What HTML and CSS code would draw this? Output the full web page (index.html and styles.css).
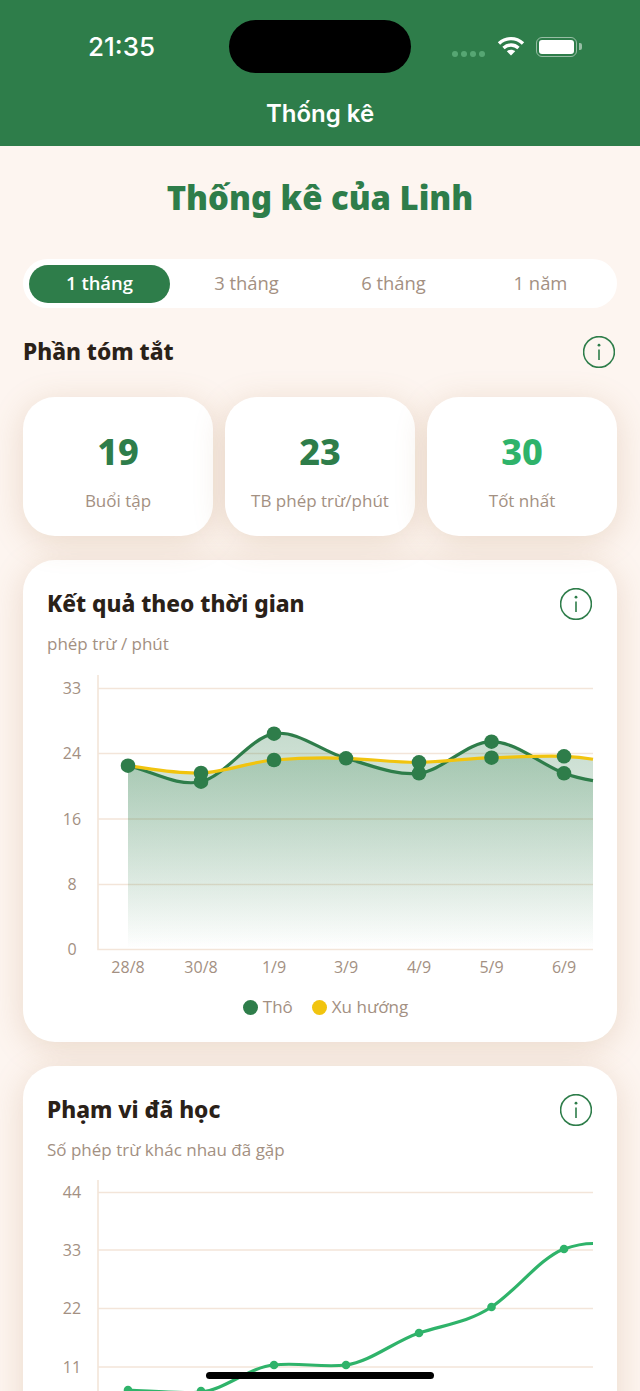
FILE: index.html
```html
<!DOCTYPE html>
<html lang="vi">
<head>
    <meta charset="UTF-8">
    <meta name="viewport" content="width=device-width, initial-scale=1.0">
    <title>Thống kê</title>
    <link rel="stylesheet" href="styles.css">
</head>
<body>
    <div class="island"></div>

    <header class="app-header">
        <div class="status-bar">
            <span class="clock">21:35</span>
            <div class="status-icons">
                <div class="signal"><i></i><i></i><i></i><i></i></div>
                <svg class="wifi" width="28" height="20" viewBox="0 0 28 20">
                    <path d="M2 7.5C9 1 19 1 26 7.5" />
                    <path d="M6.5 12C11 8 17 8 21.5 12" />
                    <path class="wifi-tip" d="M14 19.5L9.8 15.2C12.2 13.2 15.8 13.2 18.2 15.2Z" />
                </svg>
                <div class="battery"><div class="battery-level"></div></div>
            </div>
        </div>
        <div class="nav-title">Thống kê</div>
    </header>

    <main class="content">
        <h1>Thống kê của Linh</h1>

        <div class="range-tabs">
            <span class="range-tab active">1 tháng</span>
            <span class="range-tab">3 tháng</span>
            <span class="range-tab">6 tháng</span>
            <span class="range-tab">1 năm</span>
        </div>

        <div class="section-head">
            <h2>Phần tóm tắt</h2>
            <svg class="info" width="32" height="32" viewBox="0 0 32 32">
                <circle cx="16" cy="16" r="15.4" />
                <path d="M16 13.5V24" />
                <circle class="info-dot" cx="16" cy="9.2" r="1.4" />
            </svg>
        </div>

        <div class="stats">
            <div class="stat-card">
                <div class="stat-value">19</div>
                <div class="stat-label">Buổi tập</div>
            </div>
            <div class="stat-card">
                <div class="stat-value">23</div>
                <div class="stat-label">TB phép trừ/phút</div>
            </div>
            <div class="stat-card">
                <div class="stat-value best">30</div>
                <div class="stat-label">Tốt nhất</div>
            </div>
        </div>

        <section class="chart-card">
            <div class="section-head">
                <h2>Kết quả theo thời gian</h2>
                <svg class="info" width="32" height="32" viewBox="0 0 32 32">
                    <circle cx="16" cy="16" r="15.4" />
                    <path d="M16 13.5V24" />
                    <circle class="info-dot" cx="16" cy="9.2" r="1.4" />
                </svg>
            </div>
            <p class="chart-sub">phép trừ / phút</p>
            <svg class="chart" width="546" height="325" viewBox="47 670 546 325">
                <defs>
                    <linearGradient id="areaFade" gradientUnits="userSpaceOnUse" x1="0" y1="735" x2="0" y2="949">
                        <stop offset="0" stop-color="#2e7d4a" stop-opacity="0.27" />
                        <stop offset="1" stop-color="#2e7d4a" stop-opacity="0" />
                    </linearGradient>
                </defs>
                <path class="axis" d="M98 675V949.5H593" />
                <path class="grid" d="M98 688.5H593M98 753.5H593M98 819H593M98 884.5H593" />
                <path class="area" d="M128 765.7C152 771 177 787 201 781.7C225 776.4 250 737.6 274 733.7C298 729.9 322 751.8 346 758.3C370 764.8 395 776 419 773.3C443 770.6 467 741.7 491.5 741.7C516 741.7 540 764 564 773.3C574 777 583 779 593 780.7V949H128Z" />
                <path class="area" d="M128 765.7C152 769 177 774 201 773C225 772 250 762 274 760C298 758 322 757.5 346 758.3C370 759 395 762.5 419 762.3C443 762 467 758.5 491.5 757.7C516 757 540 755.5 564 756.3C574 756.7 583 757.5 593 759.3V949H128Z" />
                <path class="line raw" d="M128 765.7C152 771 177 787 201 781.7C225 776.4 250 737.6 274 733.7C298 729.9 322 751.8 346 758.3C370 764.8 395 776 419 773.3C443 770.6 467 741.7 491.5 741.7C516 741.7 540 764 564 773.3C574 777 583 779 593 780.7" />
                <path class="line trend" d="M128 765.7C152 769 177 774 201 773C225 772 250 762 274 760C298 758 322 757.5 346 758.3C370 759 395 762.5 419 762.3C443 762 467 758.5 491.5 757.7C516 757 540 755.5 564 756.3C574 756.7 583 757.5 593 759.3" />
                <g class="dots">
                    <circle cx="128" cy="765.7" r="7.3" />
                    <circle cx="201" cy="781.7" r="7.3" />
                    <circle cx="274" cy="733.7" r="7.3" />
                    <circle cx="346" cy="758.3" r="7.3" />
                    <circle cx="419" cy="773.3" r="7.3" />
                    <circle cx="491.5" cy="741.7" r="7.3" />
                    <circle cx="564" cy="773.3" r="7.3" />
                    <circle cx="201" cy="773" r="7.3" />
                    <circle cx="274" cy="760" r="7.3" />
                    <circle cx="419" cy="762.3" r="7.3" />
                    <circle cx="491.5" cy="757.7" r="7.3" />
                    <circle cx="564" cy="756.3" r="7.3" />
                </g>
                <g class="tick-y">
                    <text x="72" y="693.5">33</text>
                    <text x="72" y="759">24</text>
                    <text x="72" y="824.5">16</text>
                    <text x="72" y="890">8</text>
                    <text x="72" y="955">0</text>
                </g>
                <g class="tick-x">
                    <text x="128" y="973">28/8</text>
                    <text x="201" y="973">30/8</text>
                    <text x="274" y="973">1/9</text>
                    <text x="346" y="973">3/9</text>
                    <text x="419" y="973">4/9</text>
                    <text x="491.5" y="973">5/9</text>
                    <text x="564" y="973">6/9</text>
                </g>
            </svg>
            <div class="legend">
                <span class="legend-item"><i class="swatch green"></i>Thô</span>
                <span class="legend-item"><i class="swatch yellow"></i>Xu hướng</span>
            </div>
        </section>

        <section class="chart-card">
            <div class="section-head">
                <h2>Phạm vi đã học</h2>
                <svg class="info" width="32" height="32" viewBox="0 0 32 32">
                    <circle cx="16" cy="16" r="15.4" />
                    <path d="M16 13.5V24" />
                    <circle class="info-dot" cx="16" cy="9.2" r="1.4" />
                </svg>
            </div>
            <p class="chart-sub">Số phép trừ khác nhau đã gặp</p>
            <svg class="chart" width="546" height="325" viewBox="47 1176 546 325">
                <path class="axis" d="M98 1180V1425.5H593" />
                <path class="grid" d="M98 1192.5H593M98 1250H593M98 1308.5H593M98 1367H593" />
                <path class="line learned" d="M128 1390C152 1391 177 1394 201 1392C225 1390 250 1366.5 274 1365C298 1362 322 1368 346 1365C370 1362 395 1341 419 1333C443 1325 467 1323 491.5 1307C516 1291 540 1258 564 1249C574 1245.5 583 1243.5 593 1243.5" />
                <g class="dots learned-dots">
                    <circle cx="128" cy="1390" r="4.3" />
                    <circle cx="201" cy="1391" r="4.3" />
                    <circle cx="274" cy="1365" r="4.3" />
                    <circle cx="346" cy="1365" r="4.3" />
                    <circle cx="419" cy="1333" r="4.3" />
                    <circle cx="491.5" cy="1307" r="4.3" />
                    <circle cx="564" cy="1249" r="4.3" />
                </g>
                <g class="tick-y">
                    <text x="72" y="1198">44</text>
                    <text x="72" y="1256">33</text>
                    <text x="72" y="1314">22</text>
                    <text x="72" y="1372.5">11</text>
                </g>
            </svg>
        </section>
    </main>

    <div class="home-indicator"></div>
</body>
</html>
```

FILE: styles.css
```css
:root {
    --green: #2e7d4a;
    --bright-green: #2fb36a;
    --yellow: #f1c40f;
    --bg: #fdf5f0;
    --ink: #2a2118;
    --muted: #a39082;
    --line: #f3e5d9;
    --heading-font: 'Noto Sans', sans-serif;
    --body-font: 'Open Sans', sans-serif;
}

body, html {
    margin: 0;
    padding: 0;
    height: 1391px;
    overflow: hidden;
    background-color: var(--bg);
    font-family: var(--body-font);
    color: var(--ink);
}

body {
    position: relative;
}

/* phone chrome, sits over everything */
.island {
    position: absolute;
    top: 20px;
    left: 229px;
    width: 182px;
    height: 53px;
    border-radius: 27px;
    background: #000;
}

.home-indicator {
    position: absolute;
    top: 1372px;
    left: 206px;
    width: 228px;
    height: 7px;
    border-radius: 4px;
    background: #000;
}

.app-header {
    height: 146px;
    box-sizing: border-box;
    background-color: var(--green);
    color: #fff;
    display: flex;
    flex-direction: column;
}

.status-bar {
    height: 95px;
    display: flex;
    justify-content: space-between;
    align-items: flex-start;
    padding: 32px 63px 0 88px;
    box-sizing: border-box;
}

.clock {
    font-family: 'Inter', sans-serif;
    font-size: 26px;
    font-weight: 500;
    line-height: 30px;
}

.status-icons {
    display: flex;
    align-items: flex-start;
    padding-top: 5px;
}

.signal {
    display: flex;
    gap: 3px;
    margin: 14px 12px 0 0;
}

.signal i {
    width: 6px;
    height: 6px;
    border-radius: 50%;
    background: rgba(120, 200, 150, 0.55);
}

.wifi {
    margin-right: 11px;
    margin-top: -1px;
}

.wifi path {
    fill: none;
    stroke: #fff;
    stroke-width: 3.4;
}

.wifi .wifi-tip {
    fill: #fff;
    stroke: none;
}

.battery {
    position: relative;
    width: 41px;
    height: 20px;
    box-sizing: border-box;
    border: 1.5px solid rgba(255, 255, 255, 0.5);
    border-radius: 6px;
    padding: 2px;
}

.battery::after {
    content: '';
    position: absolute;
    right: -6px;
    top: 5px;
    width: 3px;
    height: 7px;
    border-radius: 0 2px 2px 0;
    background: rgba(255, 255, 255, 0.5);
}

.battery-level {
    height: 100%;
    border-radius: 3px;
    background: #fff;
}

.nav-title {
    text-align: center;
    font-family: 'Inter', sans-serif;
    font-size: 24px;
    font-weight: 600;
    line-height: 38px;
}

.content {
    padding: 0 23px;
}

h1 {
    margin: 32px 0 41px;
    text-align: center;
    font-family: var(--heading-font);
    font-size: 32.8px;
    font-weight: 900;
    line-height: 40px;
    color: var(--green);
}

.range-tabs {
    display: flex;
    gap: 6px;
    padding: 6px 6px 5px;
    border-radius: 25px;
    background: #fff;
}

.range-tab {
    flex: 1;
    text-align: center;
    font-size: 18.4px;
    line-height: 36px;
    padding-bottom: 2px;
    color: var(--muted);
    border-radius: 19px;
}

.range-tab.active {
    background-color: var(--green);
    color: #fff;
    font-weight: 600;
}

.section-head {
    display: flex;
    justify-content: space-between;
    align-items: center;
}

.content > .section-head {
    margin: 28px 2px 29px 0;
}

.chart-card .info {
    margin-right: 1px;
}

h2 {
    margin: 0;
    padding-bottom: 1px;
    font-family: var(--heading-font);
    font-size: 22.7px;
    font-weight: 800;
    line-height: 31px;
    color: var(--ink);
}

.info {
    display: block;
}

.info circle, .info path {
    fill: none;
    stroke: var(--green);
    stroke-width: 1.6;
}

.info .info-dot {
    fill: var(--green);
    stroke: none;
}

.stats {
    display: grid;
    grid-template-columns: repeat(3, 190px);
    gap: 12px;
}

.stat-card, .chart-card {
    background: #fff;
    border-radius: 32px;
    box-shadow: 0 6px 32px rgba(170, 120, 70, 0.22);
}

.stat-card {
    height: 139px;
    text-align: center;
    padding-top: 33px;
    box-sizing: border-box;
}

.stat-value {
    font-family: var(--heading-font);
    font-size: 36px;
    font-weight: 800;
    line-height: 44px;
    color: var(--green);
}

.stat-value.best {
    color: var(--bright-green);
}

.stat-label {
    margin-top: 15px;
    font-size: 17px;
    line-height: 24px;
    color: var(--muted);
}

.chart-card {
    margin-top: 24px;
    padding: 28px 24px 23px;
}

.chart-sub {
    margin: 12px 0 14px;
    font-size: 17px;
    line-height: 24px;
    color: var(--muted);
}

.chart {
    display: block;
    overflow: visible;
}

.axis, .grid {
    fill: none;
    stroke: var(--line);
    stroke-width: 1.6;
}

.area {
    fill: url(#areaFade);
}

.line {
    fill: none;
    stroke-width: 3.2;
}

.line.raw {
    stroke: var(--green);
}

.line.trend {
    stroke: var(--yellow);
}

.line.learned {
    stroke: var(--bright-green);
}

.dots {
    fill: var(--green);
}

.learned-dots {
    fill: var(--bright-green);
}

.tick-y text, .tick-x text {
    font-family: var(--body-font);
    font-size: 16px;
    fill: var(--muted);
    text-anchor: middle;
}

.legend {
    display: flex;
    justify-content: center;
    gap: 19px;
    padding-left: 11px;
    font-size: 17px;
    line-height: 24px;
    color: var(--muted);
}

.legend-item {
    display: flex;
    align-items: center;
    gap: 5px;
}

.swatch {
    width: 15px;
    height: 15px;
    border-radius: 50%;
}

.swatch.green {
    background: var(--green);
}

.swatch.yellow {
    background: var(--yellow);
}
```
